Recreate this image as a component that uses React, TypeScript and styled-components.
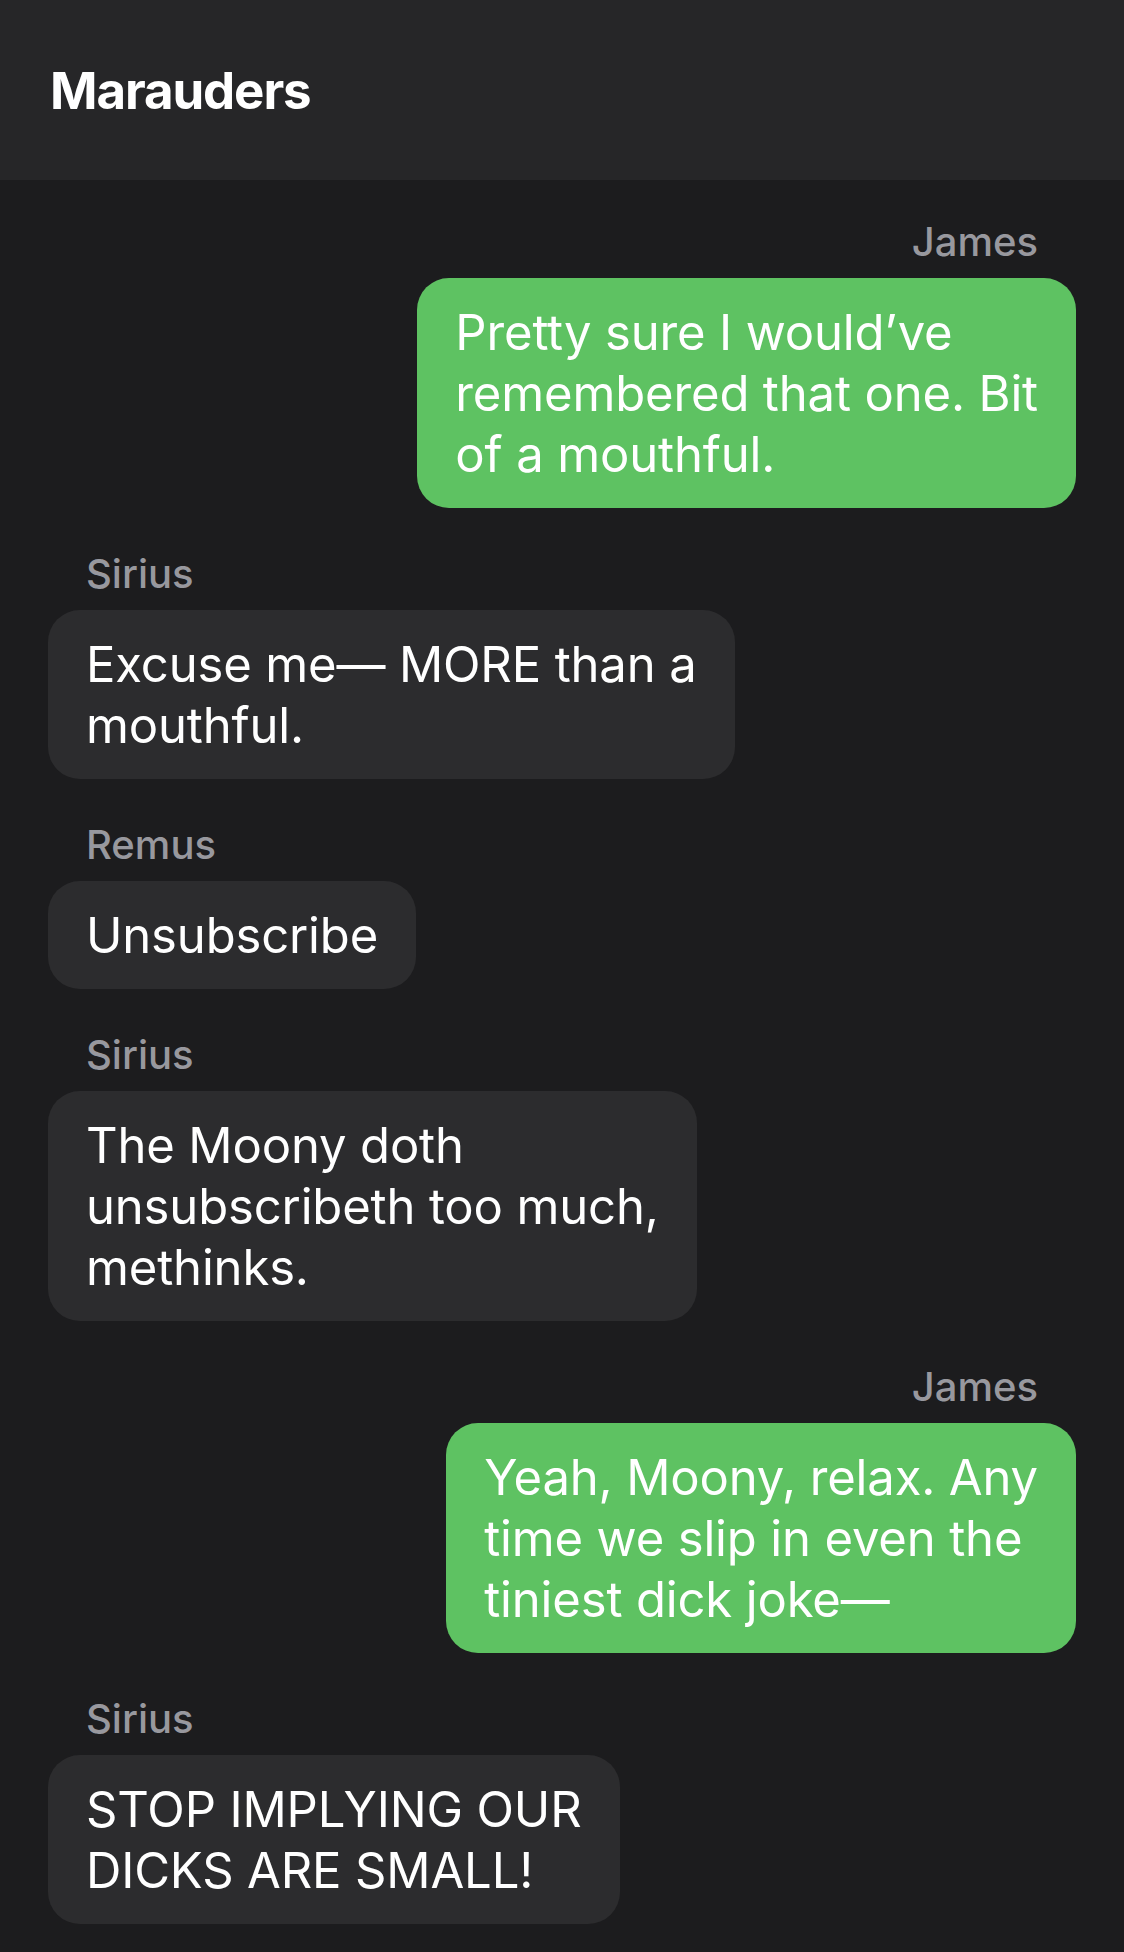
import React from "react";
import styled, { createGlobalStyle } from "styled-components";

const GlobalStyle = createGlobalStyle`
  html, body {
    margin: 0;
    padding: 0;
    background: #1c1c1e;
  }
  body {
    font-family: Inter, "Noto Sans", "Liberation Sans", sans-serif;
    -webkit-font-smoothing: antialiased;
  }
  * { box-sizing: border-box; }
`;

const Page = styled.div`
  min-height: 1952px;
  background: #1c1c1e;
  display: flex;
  flex-direction: column;
`;

const Header = styled.header`
  height: 180px;
  background: #262628;
  display: flex;
  align-items: center;
  padding: 0 50px;
`;

const Title = styled.h1`
  margin: 0;
  color: #ffffff;
  font-size: 51px;
  font-weight: 700;
  letter-spacing: -1.1px;
  line-height: 1;
`;

const Thread = styled.main`
  display: flex;
  flex-direction: column;
  gap: 43px;
  padding: 39px 48px 30px;
`;

const Group = styled.section<{ $mine: boolean }>`
  display: flex;
  flex-direction: column;
  align-items: ${(p) => (p.$mine ? "flex-end" : "flex-start")};
`;

const Sender = styled.div`
  color: #98989e;
  font-size: 40px;
  font-weight: 450;
  line-height: 46px;
  padding: 0 38px;
  margin-bottom: 13px;
`;

const Bubble = styled.div<{ $mine: boolean }>`
  background: ${(p) => (p.$mine ? "#5ec262" : "#2c2c2e")};
  color: #ffffff;
  border-radius: 32px;
  padding: 24px 38px 23px;
  font-size: 49px;
  line-height: 61px;
  letter-spacing: -0.15px;
`;

const Line = styled.span`
  display: block;
  white-space: nowrap;
`;

type Message = { from: string; lines: string[]; mine: boolean };

const messages: Message[] = [
  { from: "James", mine: true, lines: ["Pretty sure I would’ve", "remembered that one. Bit", "of a mouthful."] },
  { from: "Sirius", mine: false, lines: ["Excuse me— MORE than a", "mouthful."] },
  { from: "Remus", mine: false, lines: ["Unsubscribe"] },
  { from: "Sirius", mine: false, lines: ["The Moony doth", "unsubscribeth too much,", "methinks."] },
  { from: "James", mine: true, lines: ["Yeah, Moony, relax. Any", "time we slip in even the", "tiniest dick joke—"] },
  { from: "Sirius", mine: false, lines: ["STOP IMPLYING OUR", "DICKS ARE SMALL!"] },
];

export default function App() {
  return (
    <Page>
      <GlobalStyle />
      <Header>
        <Title>Marauders</Title>
      </Header>
      <Thread>
        {messages.map((m, i) => (
          <Group key={i} $mine={m.mine}>
            <Sender>{m.from}</Sender>
            <Bubble $mine={m.mine}>
              {m.lines.map((l, j) => (
                <Line key={j}>{l}</Line>
              ))}
            </Bubble>
          </Group>
        ))}
      </Thread>
    </Page>
  );
}
